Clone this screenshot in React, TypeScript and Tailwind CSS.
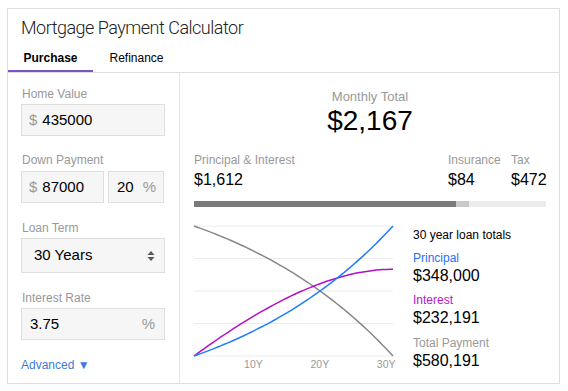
const P = 348000
const RATE = 0.0375 / 12
const N = 360
const MONTHLY = (P * RATE) / (1 - Math.pow(1 + RATE, -N))

const W = 199
const TOP = 6
const H = 130

function curves() {
  const bal: string[] = []
  const prin: string[] = []
  const int: string[] = []
  for (let k = 0; k <= N; k += 6) {
    const g = Math.pow(1 + RATE, k)
    const b = P * g - (MONTHLY * (g - 1)) / RATE
    const paid = P - b
    const interest = MONTHLY * k - paid
    const x = ((k / N) * W).toFixed(1)
    const y = (v: number) => (TOP + H - (v / P) * H).toFixed(1)
    bal.push(`${x},${y(b)}`)
    prin.push(`${x},${y(paid)}`)
    int.push(`${x},${y(interest)}`)
  }
  return { bal: bal.join(' '), prin: prin.join(' '), int: int.join(' ') }
}

const Label = ({ children }: { children: React.ReactNode }) => (
  <div className="text-[12px] leading-[16px] text-[#999]">{children}</div>
)

const Box = ({ children, className = '' }: { children: React.ReactNode; className?: string }) => (
  <div className={`flex items-center bg-[#f6f6f6] border border-[#dedede] text-[15px] text-black ${className}`}>
    {children}
  </div>
)

export default function App() {
  const c = curves()
  const ticks = [66.3, 132.7, 199]
  return (
    <div className="w-[568px] h-[391px] bg-white pt-[8px] pl-[7px] font-['Liberation_Sans',Arial,sans-serif]">
      <div className="w-[553px] h-[376px] border border-[#dddddd] flex flex-col">
        <div className="border-b border-[#dddddd]">
          <div className="pl-[13px] pt-[7px] leading-[24px] text-[18px] font-light text-[#222] font-['Roboto',sans-serif] tracking-[-0.5px]">
            Mortgage Payment Calculator
          </div>
          <div className="flex text-[12px]">
            <div className="w-[85px] text-center pt-[10px] pb-[4px] leading-[16px] font-bold text-black border-b-2 border-[#7b55c0]">
              Purchase
            </div>
            <div className="w-[87px] text-center pt-[10px] pb-[4px] leading-[16px] text-black border-b-2 border-transparent">
              Refinance
            </div>
          </div>
        </div>

        <div className="flex flex-1">
          {/* inputs */}
          <div className="w-[172px] border-r border-[#e5e5e5] pl-[13px] pr-[14px] pt-[13px] flex flex-col">
            <div className="pl-[1px]"><Label>Home Value</Label></div>
            <Box className="mt-[2px] h-[32px] pl-[7px]">
              <span className="text-[#999] mr-[5px]">$</span>435000
            </Box>

            <div className="mt-[16px] pl-[1px]"><Label>Down Payment</Label></div>
            <div className="mt-[3px] flex gap-[4px]">
              <Box className="w-[83px] h-[32px] pl-[7px]">
                <span className="text-[#999] mr-[5px]">$</span>87000
              </Box>
              <Box className="w-[56px] h-[32px] pl-[8px]">
                20<span className="text-[#999] ml-[9px]">%</span>
              </Box>
            </div>

            <div className="mt-[17px] pl-[1px]"><Label>Loan Term</Label></div>
            <Box className="mt-[2px] h-[35px] pl-[12px] pr-[9px] justify-between">
              <span>30 Years</span>
              <svg width="8" height="12" viewBox="0 0 8 12">
                <path d="M4 1 L7.5 5 L0.5 5 Z M4 11 L0.5 7 L7.5 7 Z" fill="#555" />
              </svg>
            </Box>

            <div className="mt-[17px] pl-[1px]"><Label>Interest Rate</Label></div>
            <Box className="mt-[2px] h-[32px] pl-[8px] pr-[9px] justify-between">
              <span>3.75</span>
              <span className="text-[#999]">%</span>
            </Box>

            <div className="mt-[17px] text-[12px] leading-[16px] text-[#3d7be0]">
              Advanced <span className="text-[12px]">▼</span>
            </div>
          </div>

          {/* results */}
          <div className="flex-1 pl-[14px] pr-[13px] pt-[16px] flex flex-col">
            <div className="text-center text-[13px] leading-[16px] text-[#999]">Monthly Total</div>
            <div className="text-center text-[28px] leading-[32px] text-black">$2,167</div>

            <div className="mt-[15px] flex">
              <div className="flex-1">
                <Label>Principal &amp; Interest</Label>
                <div className="mt-[2px] text-[16px] leading-[20px] text-black">$1,612</div>
              </div>
              <div className="w-[63px]">
                <Label>Insurance</Label>
                <div className="mt-[2px] text-[16px] leading-[20px] text-black">$84</div>
              </div>
              <div className="w-[35px]">
                <Label>Tax</Label>
                <div className="mt-[2px] text-[16px] leading-[20px] text-black">$472</div>
              </div>
            </div>

            <div className="mt-[11px] h-[6px] flex">
              <div className="bg-[#7a7a7a]" style={{ width: `${(1612 / 2167) * 100}%` }} />
              <div className="bg-[#c9c9c9]" style={{ width: `${(84 / 2167) * 100}%` }} />
              <div className="bg-[#ececec] flex-1" />
            </div>

            <div className="mt-[13px] flex">
              <svg width="205" height="152" className="shrink-0 overflow-visible">
                {[0, 1, 2, 3, 4].map((i) => (
                  <line key={i} x1="0" x2={W} y1={TOP + (H / 4) * i} y2={TOP + (H / 4) * i} stroke="#ececec" strokeWidth="1" />
                ))}
                <polyline points={c.bal} fill="none" stroke="#888" strokeWidth="1.5" />
                <polyline points={c.int} fill="none" stroke="#b30fc6" strokeWidth="1.5" />
                <polyline points={c.prin} fill="none" stroke="#1f7bff" strokeWidth="1.5" />
                {['10Y', '20Y', '30Y'].map((t, i) => (
                  <text key={t} x={ticks[i] + 2.5} y="148" textAnchor="end" fontSize="10.5" fill="#999" fontFamily="Liberation Sans, Arial, sans-serif">
                    {t}
                  </text>
                ))}
              </svg>
              <div className="ml-[14px] pt-[7px] flex flex-col">
                <div className="text-[12px] leading-[16px] text-black">30 year loan totals</div>
                <div className="mt-[7px] text-[12px] leading-[16px] text-[#2a6ff5]">Principal</div>
                <div className="text-[16px] leading-[20px] text-black">$348,000</div>
                <div className="mt-[6px] text-[12px] leading-[16px] text-[#b21ac6]">Interest</div>
                <div className="text-[16px] leading-[20px] text-black">$232,191</div>
                <div className="mt-[7px] text-[12px] leading-[16px] text-[#999]">Total Payment</div>
                <div className="text-[16px] leading-[20px] text-black">$580,191</div>
              </div>
            </div>
          </div>
        </div>
      </div>
    </div>
  )
}
